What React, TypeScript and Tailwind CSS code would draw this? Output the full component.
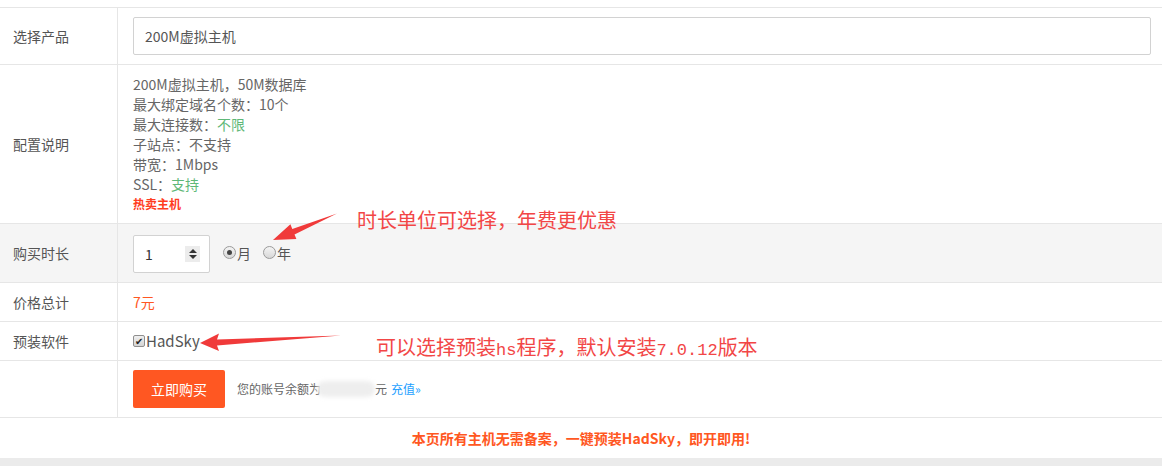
import React from 'react';

const font = { fontFamily: '"Noto Sans CJK SC", "Microsoft YaHei", sans-serif' };
const mono = { fontFamily: '"Liberation Mono", monospace' };

const Row = ({ label, children, className = '', pad = 'py-[9px]' }: { label?: string; children: React.ReactNode; className?: string; pad?: string }) => (
  <div className={`flex border-t border-[#e6e6e6] ${className}`}>
    <div className="w-[118px] shrink-0 border-r border-[#e6e6e6] pl-[13px] flex items-center text-[14px] text-[#555]">
      {label}
    </div>
    <div className={`flex-1 px-[15px] ${pad} text-[14px] leading-[20px] text-[#666]`}>{children}</div>
  </div>
);

const Radio = ({ checked }: { checked?: boolean }) => (
  <span className="w-[13px] h-[13px] rounded-full border border-[#9a9a9a] bg-gradient-to-b from-[#f4f4f4] to-[#d8d8d8] flex items-center justify-center">
    {checked && <span className="w-[5px] h-[5px] rounded-full bg-[#444]" />}
  </span>
);

const Arrows = () => (
  <svg className="absolute left-0 top-0 pointer-events-none" width="1162" height="466">
    <polygon points="273,240 290.4,224.3 292.3,228.9 337,213.5 294.5,234.5 296.4,239.1" fill="#f03a3a" />
    <polygon points="200,343 219,333.5 217,339.5 341,335.5 217,345.5 219,351" fill="#f03a3a" />
  </svg>
);

export default function App() {
  return (
    <div className="relative w-[1162px] h-[466px] bg-white overflow-hidden" style={font}>
      <div className="h-[7px]" />
      <Row label="选择产品">
        <div className="h-[38px] w-[1018px] border border-[#d2d2d2] rounded-[2px] flex items-center px-[11px] text-[14px] text-[#555]">
          200M虚拟主机
        </div>
      </Row>
      <Row label="配置说明">
        <div>200M虚拟主机，50M数据库</div>
        <div>最大绑定域名个数：10个</div>
        <div>最大连接数：<span className="text-[#5fb878]">不限</span></div>
        <div>子站点：不支持</div>
        <div>带宽：1Mbps</div>
        <div>SSL：<span className="text-[#5fb878]">支持</span></div>
        <div className="text-[12px] font-bold text-[#ff3d1f]">热卖主机</div>
      </Row>
      <Row label="购买时长" className="bg-[#f5f5f5]" pad="pt-[11px] pb-[9px]">
        <div className="flex items-center">
          <div className="h-[38px] w-[77px] border border-[#d2d2d2] rounded-[2px] bg-white flex items-center justify-between pl-[11px] pr-[9px]">
            <span className="text-[14px] text-[#333]">1</span>
            <span className="w-[15px] h-[16px] bg-[#ececec] flex flex-col items-center justify-center gap-[2px]">
              <span className="w-0 h-0 border-l-[4px] border-r-[4px] border-b-[4px] border-l-transparent border-r-transparent border-b-[#333]" />
              <span className="w-0 h-0 border-l-[4px] border-r-[4px] border-t-[4px] border-l-transparent border-r-transparent border-t-[#333]" />
            </span>
          </div>
          <div className="ml-[13px] flex items-center -mt-[3px]">
            <Radio checked />
            <span className="ml-[1px] text-[14px] text-[#555]">月</span>
          </div>
          <div className="ml-[12px] flex items-center -mt-[3px]">
            <Radio />
            <span className="ml-[1px] text-[14px] text-[#555]">年</span>
          </div>
        </div>
      </Row>
      <Row label="价格总计">
        <span className="text-[#ff5722]">7元</span>
      </Row>
      <Row label="预装软件">
        <div className="flex items-center">
          <span className="w-[12px] h-[12px] border border-[#8f8f8f] rounded-[2px] bg-gradient-to-b from-[#f0f0f0] to-[#d4d4d4] flex items-center justify-center text-[10px] leading-none text-[#222]">
            ✔
          </span>
          <span className="ml-[1px] text-[15px] text-[#555]">HadSky</span>
        </div>
      </Row>
      <Row pad="py-[9px]">
        <div className="flex items-center">
          <button className="h-[38px] w-[92px] bg-[#ff5722] rounded-[2px] text-white text-[14px]">立即购买</button>
          <span className="ml-[12px] text-[12px] text-[#666]">您的账号余额为</span>
          <span className="-ml-[4px] w-[58px] h-[16px] bg-[#eeeeee] rounded-full blur-[2px]" />
          <span className="text-[12px] text-[#666]">元</span>
          <span className="ml-[4px] text-[12px] text-[#1e9fff]">充值»</span>
        </div>
      </Row>
      <div className="border-t border-[#e6e6e6] h-[41px] flex items-center justify-center text-[14px] font-bold text-[#ff5722]">
        本页所有主机无需备案，一键预装HadSky，即开即用!
      </div>
      <div className="h-[8px] bg-[#ebebeb]" />

      <Arrows />
      <div className="absolute left-[357px] top-[207px] text-[20px] leading-[26px] text-[#f24646] whitespace-nowrap">
        时长单位可选择，年费更优惠
      </div>
      <div className="absolute left-[376px] top-[334px] text-[20px] leading-[26px] text-[#f24646] whitespace-nowrap">
        可以选择预装<span className="text-[17px]" style={mono}>hs</span>程序，默认安装<span className="text-[17px]" style={mono}>7.0.12</span>版本
      </div>
    </div>
  );
}
